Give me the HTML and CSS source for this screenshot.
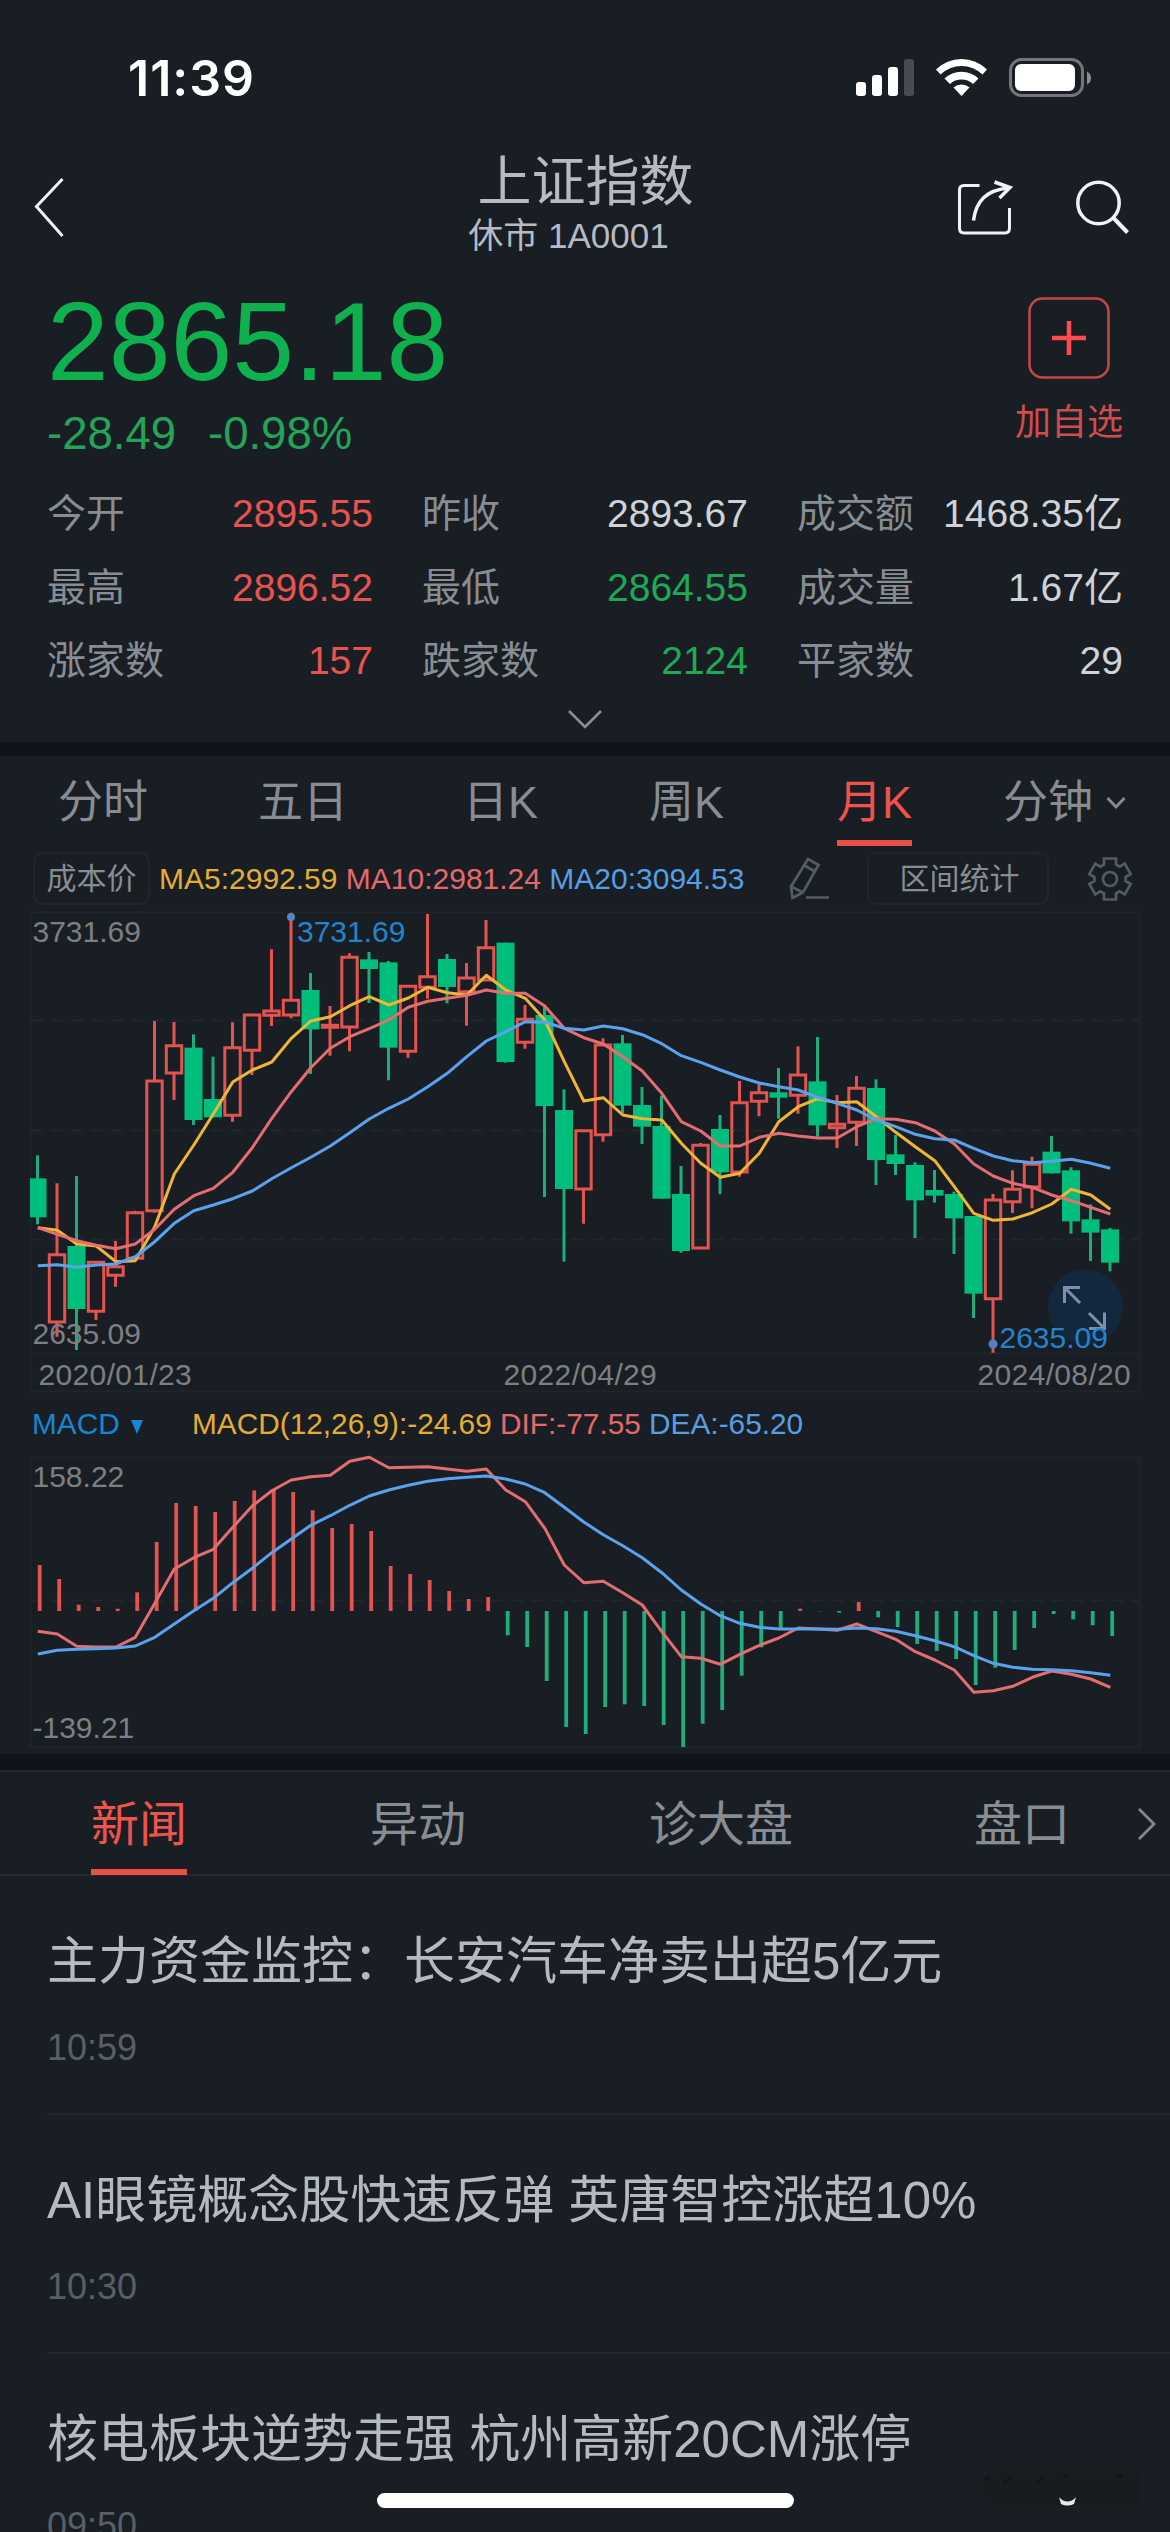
FILE: index.html
```html
<!DOCTYPE html>
<html lang="zh-CN">
<head>
<meta charset="utf-8">
<title>上证指数</title>
<link rel="stylesheet" href="styles.css">
</head>
<body>
<div class="screen">
  <div class="status">
    <span class="clock">11:39</span>
    <svg class="status-icons" width="240" height="44" viewBox="854 56 240 44">
      <g fill="#fff"><rect x="856" y="82" width="10" height="14" rx="3"/><rect x="872" y="75" width="10" height="21" rx="3"/><rect x="888" y="67" width="10" height="29" rx="3"/></g>
      <rect x="904" y="59" width="10" height="37" rx="3" fill="#484b51"/>
      <path d="M936 69.5A36.5 36.5 0 0 1 987 69.5L982.500 74.500A30 30 0 0 0 940.500 74.500Z" fill="#fff"/>
      <path d="M944.500 78.500A24.500 24.500 0 0 1 978.500 78.500L973 84A17 17 0 0 0 950 84Z" fill="#fff"/>
      <path d="M953.500 87.500A12 12 0 0 1 969.500 87.500L961.500 96Z" fill="#fff"/>
      <rect x="1010.500" y="59.500" width="72" height="36" rx="11" fill="none" stroke="#72767b" stroke-width="3"/>
      <rect x="1015" y="64" width="60" height="27" rx="6" fill="#fff"/>
      <path d="M1087 71.500Q1091 73.500 1091 78T1087 84.500Z" fill="#8b8e93"/>
    </svg>
  </div>

  <header class="nav">
    <svg class="back" width="40" height="68" viewBox="30 173 40 68"><path d="M62.500 179L36.500 206.500L62.500 236" fill="none" stroke="#f0f3f5" stroke-width="3"/></svg>
    <div class="nav-title">
      <h1>上证指数</h1>
      <p>休市 1A0001</p>
    </div>
    <svg class="nav-icons" width="180" height="64" viewBox="955 175 180 64" fill="none" stroke="#f0f3f5" stroke-width="3">
      <path d="M979.500 185.500H964Q959.500 185.500 959.500 190V228Q959.500 233 964 233H1005Q1009.500 233 1009.500 228V208"/>
      <path d="M973.500 220.500C976 201 986 190 1009 188" stroke-width="3.500"/>
      <path d="M994.500 182L1010 187.500L999.500 198" stroke-width="3.500"/>
      <circle cx="1098.500" cy="203" r="20.700" stroke-width="3.500"/><path d="M1113.500 218L1127.500 232.500" stroke-width="4"/>
    </svg>
  </header>

  <section class="quote">
    <div class="price-row">
      <div>
        <div class="price">2865.18</div>
        <div class="change"><span>-28.49</span><span>-0.98%</span></div>
      </div>
      <div class="watch">
        <svg width="82" height="82" viewBox="0 0 82 82" fill="none"><rect x="1.500" y="1.500" width="79" height="79" rx="13" stroke="#c14849" stroke-width="2.600"/><path d="M24 41H58M41 24V58" stroke="#ff4b4b" stroke-width="4.500"/></svg>
        <span>加自选</span>
      </div>
    </div>
    <div class="stats">
      <div><span>今开</span><b class="up">2895.55</b></div><div><span>昨收</span><b>2893.67</b></div><div><span>成交额</span><b>1468.35亿</b></div>
      <div><span>最高</span><b class="up">2896.52</b></div><div><span>最低</span><b class="down">2864.55</b></div><div><span>成交量</span><b>1.67亿</b></div>
      <div><span>涨家数</span><b class="up">157</b></div><div><span>跌家数</span><b class="down">2124</b></div><div><span>平家数</span><b>29</b></div>
    </div>
    <svg class="expand" width="36" height="22" viewBox="0 0 36 22"><path d="M2 2L18 18L34 2" fill="none" stroke="#8d9197" stroke-width="2.500"/></svg>
  </section>

  <section class="chart">
    <nav class="periods">
      <span>分时</span><span>五日</span><span>日K</span><span>周K</span><span class="active">月K</span>
      <span>分钟<svg width="20" height="14" viewBox="0 0 20 14"><path d="M1.500 2L10 11L18.500 2" fill="none" stroke="#888d94" stroke-width="2.800"/></svg></span>
    </nav>
    <div class="tools">
      <span class="pill cost">成本价</span>
      <span class="ma"><i class="c5">MA5:2992.59</i> <i class="c10">MA10:2981.24</i> <i class="c20">MA20:3094.53</i></span>
      <svg class="pencil" width="44" height="46" viewBox="788 852 44 46" fill="none" stroke="#555b62" stroke-width="2.700"><path d="M808 855L818.500 861L803 888.500L792.500 894L791 882.500Z M804.500 861.500L815 867.500M791 882.500L803 888.500M806 893.500H829"/></svg>
      <span class="pill range">区间统计</span>
      <svg class="gear" width="46" height="46" viewBox="-23 -23 46 46" fill="none" stroke="#555b62" stroke-width="2.700"><path d="M-6-14.500V-20.500H6V-14.500L9.600-12.400L14.700-15.400L20.700-5L15.600-2V2L20.700 5L14.700 15.400L9.600 12.400L6 14.500V20.500H-6V14.500L-9.600 12.400L-14.700 15.400L-20.700 5L-15.600 2V-2L-20.700-5L-14.700-15.400L-9.600-12.400Z"/><circle r="7"/></svg>
    </div>
    <svg id="kline" class="plot" width="1170" height="488" viewBox="0 905 1170 488">
      <path class="frame" d="M30.500 912.500H1139.500V1391.500H30.500ZM30.500 1353.500H1139.500"/>
      <path class="grid" d="M31 1020.500H1139M31 1130.500H1139M31 1239.500H1139"/>
      <text class="axis" x="32.500" y="942">3731.69</text>
      <g class="series"></g>
      <text class="axis" x="32.500" y="1344">2635.09</text>
      <circle cx="291" cy="917" r="4" fill="#5b86bd"/>
      <text class="mark" x="297" y="942">3731.69</text>
      <circle cx="1085.500" cy="1307" r="37.500" fill="#132c45" fill-opacity=".75"/>
      <path d="M1080 1287.500H1064.500V1303M1065 1288L1080 1303M1104.500 1312.500V1328.500H1089M1104 1328L1089 1313" fill="none" stroke="#7d8faf" stroke-width="3"/>
      <circle cx="993" cy="1344" r="4.500" fill="#4f83c0"/>
      <text class="mark" x="999.500" y="1347.500">2635.09</text>
      <text class="axis date" x="38.500" y="1384.500">2020/01/23</text>
      <text class="axis date" x="503.500" y="1384.500">2022/04/29</text>
      <text class="axis date" x="977.500" y="1384.500">2024/08/20</text>
    </svg>
    <div class="legend">
      <span class="indicator">MACD<svg width="12" height="14" viewBox="0 0 12 14"><path d="M0 0H12L6 14Z" fill="#1686d2"/></svg></span>
      <span class="ma"><i class="c5">MACD(12,26,9):-24.69</i> <i class="c10">DIF:-77.55</i> <i class="c20">DEA:-65.20</i></span>
    </div>
    <svg id="macd" class="plot" width="1170" height="303" viewBox="0 1451 1170 303">
      <path class="frame" d="M30.500 1457.500H1139.500V1747.500H30.500Z"/>
      <path class="grid" d="M31 1600.500H1139"/>
      <text class="axis" x="32.500" y="1487">158.22</text>
      <text class="axis" x="32.500" y="1738">-139.21</text>
      <g class="series"></g>
    </svg>
  </section>

  <section class="news">
    <nav class="news-tabs">
      <span class="active">新闻</span><span>异动</span><span>诊大盘</span><span>盘口</span>
      <svg width="22" height="34" viewBox="0 0 22 34"><path d="M3 2L18 17L3 32" fill="none" stroke="#82878e" stroke-width="2.800"/></svg>
    </nav>
    <article><h2>主力资金监控：长安汽车净卖出超5亿元</h2><time>10:59</time></article>
    <article><h2>AI眼镜概念股快速反弹 英唐智控涨超10%</h2><time>10:30</time></article>
    <article><h2>核电板块逆势走强 杭州高新20CM涨停</h2><time>09:50</time></article>
  </section>
  <div class="home-bar"></div>
  <svg class="smudge" width="170" height="40" viewBox="0 0 170 40"><rect x="4" y="4" width="158" height="32" rx="8" fill="#191c1f"/><path d="M5 10l6-2M24 14l8-5M58 13l8-5M84 8l5-2M138 8l5-2" stroke="#131618" stroke-width="3"/><path d="M80 28C85 34 92 34 97 28L95 35Q88 38 82 35Z" fill="#e6e9ea"/></svg>
</div>
<script src="chart.js"></script>
</body>
</html>
```
FILE: styles.css
```css
* { box-sizing: border-box; margin: 0; padding: 0; }
body {
  width: 1170px; height: 2532px; overflow: hidden;
  background: #191e25; color: #888d94;
  font-family: "Liberation Sans", "Noto Sans CJK SC", sans-serif;
}
.screen { position: relative; width: 1170px; height: 2532px; overflow: hidden; display: flex; flex-direction: column; }
svg { display: block; flex: none; }
h1, h2, b, i { font-weight: 400; font-style: normal; }

.status { height: 140px; flex: none; padding: 56px 76px 0 128px; display: flex; justify-content: space-between; align-items: flex-start; }
.clock { font: 600 50px/44px Inter, sans-serif; color: #fff; letter-spacing: 1px; }

.nav { height: 140px; flex: none; padding: 0 35px 0 30px; display: flex; justify-content: space-between; }
.back { margin-top: 33px; }
.nav-icons { margin-top: 35px; }
.nav-title { width: 400px; margin-left: 146px; margin-top: 10px; text-align: center; color: #b6bac1; }
.nav-title h1 { font-size: 54px; line-height: 64px; }
.nav-title p { font-size: 35px; line-height: 43px; padding-right: 34px; }

.quote { height: 462px; flex: none; padding: 0 47px; }
.price-row { height: 197px; padding-top: 2px; display: flex; justify-content: space-between; }
.price { font-size: 111px; line-height: 120px; color: #0fb14f; }
.change { margin-top: 4px; display: flex; gap: 32px; font-size: 45.500px; line-height: 56px; color: #23a458; }
.watch { display: flex; flex-direction: column; align-items: center; padding-top: 15px; color: #d14c4c; font-size: 36px; line-height: 44px; gap: 22px; width: 108px; white-space: nowrap; }
.stats { display: grid; grid-template-columns: repeat(3, 326px); column-gap: 49px; grid-auto-rows: 73.500px; font-size: 39px; line-height: 73px; }
.stats div { display: flex; justify-content: space-between; white-space: nowrap; }
.stats b { color: #cfd2d6; }
.stats .up { color: #e85350; }
.stats .down { color: #1eaa55; }
.expand { margin: 11px auto 0; }

.chart { border-top: 14px solid #0f1418; height: 1012px; flex: none; }
.periods { display: grid; grid-template-columns: 200px 205px 186px 188px 166px 167px; padding-left: 58px; height: 96px; font-size: 45px; line-height: 84px; white-space: nowrap; }
.periods span { display: flex; align-items: center; height: 90px; padding-top: 4px; justify-self: start; }
.periods span svg { margin: 0 0 0 13px; }
.periods .active { color: #f0524d; border-bottom: 6px solid #e85149; padding-top: 9px; }
.tools { display: flex; align-items: center; height: 53px; padding-left: 33px; font-size: 30px; }
.pill { height: 53px; border: 2px solid #20262b; border-radius: 10px; line-height: 50px; text-align: center; }
.cost { width: 117px; margin-right: 9px; }
.range { width: 182px; margin: 0 38px 0 35px; padding-left: 3px; }
.pencil { margin-left: auto; }
.gear { margin-right: 37px; }
.ma { white-space: pre; }
.c5 { color: #e4ad33; }
.c10 { color: #e5696c; }
.c20 { color: #569fe2; }

.plot { overflow: hidden; }
.frame { fill: none; stroke: #20252a; stroke-width: 2; }
.grid { fill: none; stroke: #22272b; stroke-width: 2; stroke-dasharray: 12 8; }
.axis { font-size: 30px; fill: #7d8083; }
.date { letter-spacing: .35px; }
.mark { font-size: 30px; fill: #2284ce; }
.line { fill: none; stroke-width: 3; stroke-linejoin: round; }
.l5 { stroke: #efb536; }
.l10 { stroke: #e46d70; }
.l20 { stroke: #5aa3ec; }
.rise { stroke: #e3534f; fill: none; stroke-width: 3; }
.fall { stroke: #1fae7b; fill: none; stroke-width: 3; }
.solid { fill: #02be7c; }
.hist { stroke-width: 3.800; }
.legend { display: flex; height: 58px; align-items: center; padding: 3px 0 0 32px; font-size: 29.800px; }
.indicator { width: 160px; display: flex; align-items: center; gap: 11px; color: #1686d2; }
.indicator svg { margin-top: 6px; }

.news { border-top: 16px solid #0f1418; flex: none; }
.news-tabs { display: grid; grid-template-columns: 279px 279px 325px 162px 34px; padding-left: 91px; height: 106px; border-top: 2px solid #22282d; border-bottom: 2px solid #252a2e; font-size: 48px; line-height: 105px; }
.news-tabs span { justify-self: start; height: 103px; }
.news-tabs .active { color: #ee534c; border-bottom: 6px solid #e9504b; }
.news-tabs svg { margin-top: 35px; }
article { margin-left: 47px; height: 239px; border-bottom: 2px solid #21272b; padding-top: 51px; }
article h2 { font-size: 51px; line-height: 70px; color: #b5bac2; white-space: nowrap; }
article time { display: block; margin-top: 28px; font-size: 36px; line-height: 46px; color: #585f67; }
.home-bar { position: absolute; left: 377px; top: 2493px; width: 417px; height: 15px; border-radius: 8px; background: #fff; }
.smudge { position: absolute; left: 979px; top: 2469px; }
```
FILE: chart.js
```js
const STEP = 19.5, FIRST = 37.5;
const el = (parent, name, attrs) => {
  const node = document.createElementNS('http://www.w3.org/2000/svg', name);
  for (const key in attrs) node.setAttribute(key, attrs[key]);
  parent.appendChild(node);
};
const drawLine = (parent, top, values, cls) => el(parent, 'polyline', {
  class: 'line ' + cls,
  points: values.map((v, i) => (FIRST + i * STEP + .3) + ',' + (top + v / 3).toFixed(1)).join(' ')
});

// Monthly candles: direction, high, body top, body bottom, low (thirds of a pixel below y=890)
const candles = `g 796 865 982 1003|r 880 1094 1296 1340|g 858 1068 1257 1380|r 1117 1117 1264 1290|r 1053 1130 1156 1190|r 962 968 1105 1105|r 393 573 962 968|r 396 467 549 630|g 433 473 690 705|g 500 627 682 682|r 397 473 676 695|r 374 375 481 555|r 178 363 376 408|r 68 331 375 385|g 249 300 418 552|r 348 406 412 497|r 190 202 411 484|g 186 208 237 339|g 213 217 473 571|r 287 289 484 503|r 72 260 292 326|g 192 207 291 340|r 219 264 305 407|r 90 173 270 270|g 158 158 516 518|r 345 388 457 476|g 344 375 648 921|g 598 660 897 1115|r 720 722 897 1001|r 445 465 734 755|g 435 460 647 670|g 591 645 710 762|g 617 708 926 926|g 828 912 1083 1088|r 759 766 1074 1074|g 675 717 847 912|r 573 638 846 860|r 580 608 634 679|g 534 607 623 686|r 469 555 616 671|g 441 574 706 740|r 615 703 713 774|r 558 595 697 768|g 568 594 810 885|g 735 793 822 855|g 817 825 931 1044|g 840 900 917 938|g 905 912 985 1092|g 978 978 1211 1284|r 912 930 1226 1388|r 841 898 935 969|r 800 823 891 955|g 738 785 850 850|g 832 841 994 1031|g 943 988 1028 1113|g 1014 1018 1118 1144`.split('|').map(s => s.split(' '));
const ma5 = [1013,1021,1062,1068,1115,1112,1010,852,765,672,576,540,516,445,393,380,347,320,345,324,292,308,315,256,300,325,390,515,633,623,675,686,690,760,820,862,850,790,695,650,626,638,635,680,727,770,812,890,970,991,987,968,942,898,915,958];
const ma10 = [1013,1033,1052,1066,1076,1062,1018,958,917,895,847,773,685,605,533,475,440,416,390,352,334,325,316,300,310,310,348,415,443,462,500,543,610,695,723,768,768,742,730,738,744,744,710,686,688,698,723,762,822,858,880,892,915,932,952,972];
const ma20 = [1127,1124,1132,1125,1122,1100,1055,1000,962,945,926,903,866,833,802,768,728,687,655,627,590,550,500,453,425,395,396,415,420,408,416,434,461,497,517,540,561,579,590,600,622,640,660,690,710,733,746,750,775,798,812,818,814,808,820,835];

const k = document.querySelector('#kline .series');
candles.forEach(([dir, ...v], i) => {
  const x = FIRST + i * STEP;
  const [high, top, bottom, low] = v.map(n => 890 + n / 3);
  if (dir === 'g') {
    el(k, 'path', { class: 'fall', d: `M${x} ${high}V${low}` });
    const left = Math.max(x - 9, 30);
    el(k, 'rect', { class: 'solid', x: left, y: top, width: x + 9 - left, height: bottom - top });
  } else {
    el(k, 'path', { class: 'rise', d: `M${x} ${high}V${top}M${x} ${bottom}V${low}M${x - 7.700} ${top}H${x + 7.700}V${bottom}H${x - 7.700}Z` });
  }
});
drawLine(k, 890, ma5, 'l5');
drawLine(k, 890, ma10, 'l10');
drawLine(k, 890, ma20, 'l20');

// Histogram ends and both lines (thirds of a pixel below y=1370); the zero level is 723
const hist = [585,627,704,711,716,667,516,399,408,426,393,361,357,366,421,474,462,483,588,612,630,663,687,681,796,831,933,1071,1092,1011,1003,1008,1065,1131,1061,1020,917,832,776,716,724,728,696,742,771,822,843,867,945,893,840,774,732,748,766,798];
const dif = [784,792,829,831,831,802,700,597,563,538,472,408,362,330,320,316,274,262,293,292,290,297,304,297,360,395,475,585,638,634,668,705,785,860,865,883,853,826,804,774,777,781,762,785,808,845,870,900,967,962,949,922,903,913,927,952];
const dea = [852,841,838,836,834,828,802,762,722,685,638,595,548,507,466,437,406,378,360,346,334,326,322,318,327,342,368,412,456,494,527,563,608,660,702,737,760,772,777,777,777,778,774,776,784,797,812,830,857,880,892,898,899,902,908,916];
const m = document.querySelector('#macd .series');
hist.forEach((v, i) => el(m, 'path', {
  class: (v < 723 ? 'rise' : 'fall') + ' hist',
  d: `M${FIRST + i * STEP + 2.200} 1611V${1370 + v / 3}`
}));
drawLine(m, 1370, dif, 'l10');
drawLine(m, 1370, dea, 'l20');
```
